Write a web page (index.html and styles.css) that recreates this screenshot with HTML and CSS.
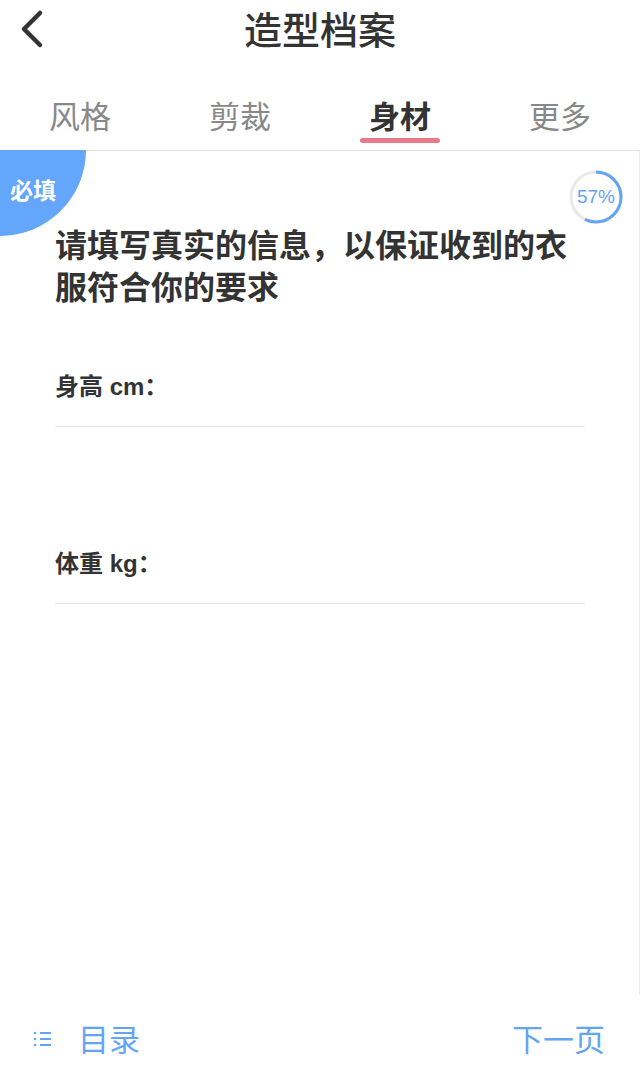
FILE: index.html
```html
<!DOCTYPE html>
<html lang="zh-CN">
<head>
    <meta charset="UTF-8">
    <meta name="viewport" content="width=device-width, initial-scale=1.0">
    <title>造型档案</title>
    <link rel="stylesheet" href="styles.css">
</head>
<body>
    <div class="page">
        <header class="nav">
            <a class="back" href="#">
                <svg width="30" height="40" viewBox="0 0 30 40">
                    <path d="M24 4 L8 20 L24 36" fill="none" stroke="#333" stroke-width="4.5" stroke-linecap="round" stroke-linejoin="round"/>
                </svg>
            </a>
            <h1 class="title">造型档案</h1>
            <span></span>
        </header>

        <nav class="tabs">
            <div class="tab">风格</div>
            <div class="tab">剪裁</div>
            <div class="tab active">身材</div>
            <div class="tab">更多</div>
        </nav>

        <section class="card">
            <div class="badge"><span>必填</span></div>
            <div class="progress">
                <svg width="60" height="60" viewBox="0 0 60 60">
                    <circle cx="30" cy="30" r="25" fill="none" stroke="#e9e9e9" stroke-width="3"/>
                    <circle cx="30" cy="30" r="25" fill="none" stroke="#64a5f3" stroke-width="3"
                        stroke-dasharray="89.5 157.1" transform="rotate(-90 30 30)"/>
                </svg>
                <span class="progress-text">57%</span>
            </div>

            <h2 class="question">请填写真实的信息，以保证收到的衣服符合你的要求</h2>

            <div class="field">
                <label>身高 cm：</label>
                <input type="text" class="input">
            </div>
            <div class="field">
                <label>体重 kg：</label>
                <input type="text" class="input">
            </div>
        </section>

        <footer class="footer">
            <a class="menu" href="#">
                <svg width="20" height="20" viewBox="0 0 20 20">
                    <circle cx="2" cy="4" r="1.3" fill="#64a5f3"/>
                    <circle cx="2" cy="10" r="1.3" fill="#64a5f3"/>
                    <circle cx="2" cy="16" r="1.3" fill="#64a5f3"/>
                    <path d="M7 4 H18 M7 10 H18 M7 16 H18" stroke="#64a5f3" stroke-width="2"/>
                </svg>
                目录
            </a>
            <a class="next" href="#">下一页</a>
        </footer>
    </div>
</body>
</html>
```

FILE: styles.css
```css
body {
    margin: 0;
    font-family: "Noto Sans CJK SC", "Noto Sans", sans-serif;
    color: #333;
    background: #fff;
}
a {
    text-decoration: none;
}
.page {
    display: flex;
    flex-direction: column;
    height: 1081px;
}
.nav {
    display: grid;
    grid-template-columns: 64px 1fr 64px;
    align-items: center;
    height: 56px;
}
.back {
    display: flex;
    padding-left: 16px;
    padding-top: 2px;
}
.title {
    margin: 0;
    text-align: center;
    font-size: 38px;
    font-weight: 500;
    line-height: 56px;
}
.tabs {
    display: grid;
    grid-template-columns: repeat(4, 1fr);
    height: 94px;
}
.tab {
    justify-self: center;
    margin-top: 40px;
    height: 47px;
    font-size: 31px;
    line-height: 38px;
    color: #888;
    box-sizing: border-box;
}
.tab.active {
    color: #333;
    font-weight: bold;
    position: relative;
}
.tab.active::after {
    content: "";
    position: absolute;
    left: -9px;
    right: -9px;
    bottom: 0;
    height: 5px;
    border-radius: 3px;
    background: #e77b89;
}
.card {
    flex: 1;
    position: relative;
    border-top: 1px solid #e3e3e3;
    border-right: 1px solid #ececec;
    padding: 71px 54px 0 55px;
}
.badge {
    position: absolute;
    left: 0;
    top: -1px;
    width: 86px;
    height: 86px;
    background: #63a6fb;
    border-bottom-right-radius: 86px;
}
.badge span {
    display: block;
    padding: 24px 0 0 10px;
    color: #fff;
    font-size: 23px;
    font-weight: bold;
    line-height: 30px;
}
.progress {
    position: absolute;
    right: 13px;
    top: 16px;
    width: 60px;
    height: 60px;
}
.progress svg {
    display: block;
}
.progress-text {
    position: absolute;
    inset: 0;
    display: flex;
    align-items: center;
    justify-content: center;
    font-family: "Liberation Sans", sans-serif;
    font-size: 19px;
    color: #64a5f3;
}
.question {
    margin: 0;
    font-size: 32px;
    line-height: 42px;
    font-weight: bold;
    color: #333;
}
.field {
    margin-top: 66px;
    margin-bottom: 122px;
}
.field + .field {
    margin-top: 0;
}
.field label {
    display: block;
    font-family: "Liberation Sans", "Noto Sans CJK SC", sans-serif;
    font-size: 24px;
    line-height: 30px;
    font-weight: bold;
    color: #333;
}
.input {
    display: block;
    width: 100%;
    height: 24px;
    border: none;
    border-bottom: 1px solid #e6e6e6;
    outline: none;
    padding: 0;
}
.footer {
    display: flex;
    justify-content: space-between;
    align-items: center;
    height: 86px;
    padding: 0 35px 0 33px;
}
.footer a {
    display: flex;
    align-items: center;
    font-size: 31px;
    line-height: 40px;
    color: #64a5f3;
}
.menu svg {
    margin-right: 25px;
    margin-top: 2px;
}
```
